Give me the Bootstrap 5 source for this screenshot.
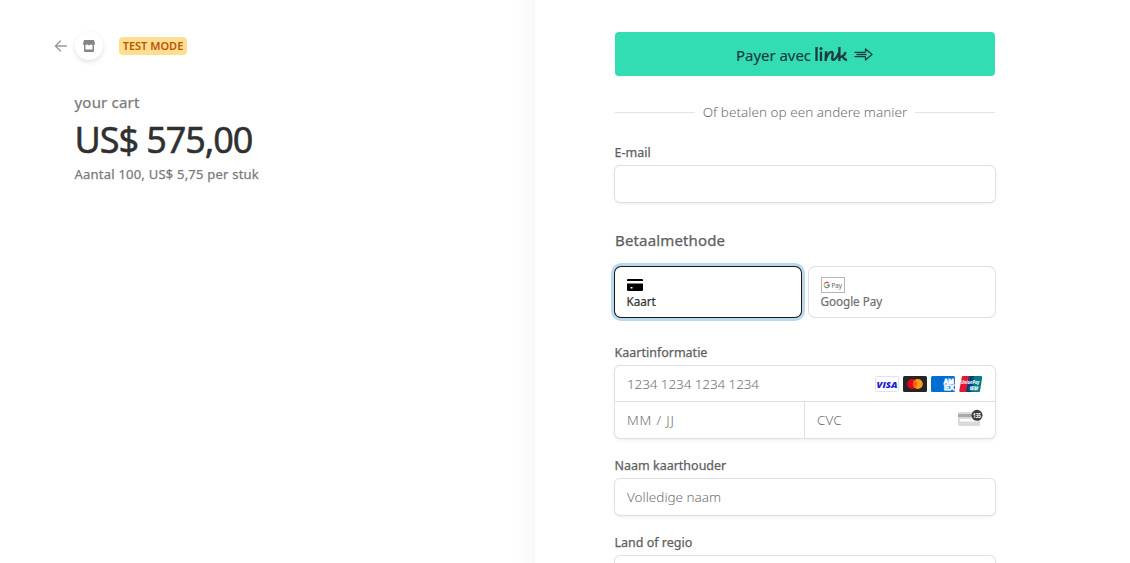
<!DOCTYPE html>
<html lang="nl">
<head>
<meta charset="utf-8">
<meta name="viewport" content="width=device-width, initial-scale=1">
<title>Checkout</title>
<link href="https://cdn.jsdelivr.net/npm/bootstrap@5.3.0/dist/css/bootstrap.min.css" rel="stylesheet">
<style>
body{font-family:"Noto Sans","Open Sans",sans-serif;color:#1a1a1a;background:#fff;height:100vh;overflow:hidden;font-size:13px}
svg{display:block;flex:none}
.summary{width:535px;padding:32px 0 0 54px;background:linear-gradient(90deg,#fff 515px,#f9f9f9 535px)}
.brand{height:28px}
.shop{width:28px;height:28px;margin-left:7px;box-shadow:0 2px 5px rgba(0,0,0,.12);background:#fff}
.mode{background:#ffde92;color:#bb5504;font-size:11px;font-weight:600;line-height:18px;height:18px;width:68px;border-radius:4px}
.order{padding-left:20.5px;margin-top:31px}
.order-name{font-size:15px;line-height:22px;color:#7a7a7a;letter-spacing:.2px;-webkit-text-stroke:.25px #7a7a7a}
.order-total{font-size:36px;font-weight:400;line-height:48px;color:#303030;margin-top:3px;letter-spacing:-1.08px;-webkit-text-stroke:.5px #303030}
.order-info{font-size:13px;line-height:20px;color:#7a7a7a;letter-spacing:.22px;-webkit-text-stroke:.25px #7a7a7a}
.pay{padding:32px 0 0 80px;width:460px}
.link-btn{height:44px;background:#33ddb3;border-radius:4px;color:#1d3944;font-size:15px;border:0;padding:2px 0 0}
.pay-word{letter-spacing:-.05px;-webkit-text-stroke:.15px #1d3944}
.divider{height:20px;margin-top:26px;font-size:13.5px;font-weight:300;color:#6e6e6e;gap:8px}
.divider i{height:1px;background:#e4e4e4;flex:1}
.or{letter-spacing:.03px}
.lbl{height:18px;line-height:20px;font-size:12.5px;color:#606060;margin-bottom:5px;-webkit-text-stroke:.25px #606060;margin-left:-.5px}
.field{height:36px;border-radius:5px;background:#fff;box-shadow:0 0 0 1px #e0e0e0,0 2px 4px rgba(0,0,0,.07),0 1px 1.5px rgba(0,0,0,.05)}
.field-pad{padding:0 12px;font-size:13.5px;font-weight:300;color:#707070}
.digits{letter-spacing:-.1px;padding-top:2px}
.mmjj{letter-spacing:.8px;padding-top:1px}
.cvc{padding-top:1px}
.sect{font-size:15px;line-height:22px;color:#606060;margin-top:27px;letter-spacing:.15px;-webkit-text-stroke:.25px #606060}
.tile{height:50px;border-radius:6px;box-shadow:0 0 0 1px #e0e0e0;padding:10px 12px 0;font-size:11.7px;line-height:17px;color:#707070}
.tile.on{box-shadow:0 0 0 1px #1a1a1a,0 0 0 4px #b9d9ec;color:#303030}
.tile .ico{height:16px}
.tile-name{display:block;margin-left:-.5px;-webkit-text-stroke:.2px currentColor;letter-spacing:-.05px}
.card-box{height:72px}
.num{height:36px;border-bottom:1px solid #e0e0e0}
.exp{height:36px;border-right:1px solid #e0e0e0}
</style>
</head>
<body>
<div class="d-flex h-100">
  <section class="summary">
    <div class="brand d-flex align-items-center">
      <svg width="14" height="14" viewBox="0 0 14 14" fill="none" stroke="#9a9a9a" stroke-width="1.4" stroke-linecap="round" stroke-linejoin="round"><path d="M12.4 7H1.4M6.4 2 1.4 7l5 5"/></svg>
      <div class="shop rounded-circle d-flex align-items-center justify-content-center me-3">
        <svg width="12" height="12" viewBox="0 0 12 12"><path fill="#858585" fill-rule="evenodd" d="M1 0h10l1 3.500c0 .8-.4 1.200-1 1.400V11a1 1 0 0 1-1 1H2a1 1 0 0 1-1-1V4.900c-.6-.2-1-.6-1-1.400zM2.500 5v4.500h7V5L7.800 4.500 6 5.500 4.200 4.500z"/></svg>
      </div>
      <span class="mode text-center">TEST MODE</span>
    </div>
    <div class="order">
      <div class="order-name">your cart</div>
      <div class="order-total">US$ 575,00</div>
      <div class="order-info">Aantal 100, US$ 5,75 per stuk</div>
    </div>
  </section>
  <main class="pay">
    <button class="link-btn w-100 d-flex align-items-center justify-content-center">
      <span class="pay-word">Payer avec</span>
      <svg class="ms-1" width="59" height="18" viewBox="0 0 59 18" fill="none" stroke="#1d3944" stroke-width="2.300"><path d="M1.500 1v14M6 5.500V15M11 5.300 10.600 15M10.800 13c1.500-4.200 3.500-7.200 5.700-7.200 3.200 0-1.200 8.100 1.700 8.100 2.400 0 4.300-3.800 5.900-7.400M24.400 1v14M24.800 10.800c2.900 0 5-1.900 5.700-4.900M26.800 10.300c2 0 1.400 4 5.200 3.400"/><circle cx="6" cy="2.500" r="1.500" fill="#1d3944" stroke="none"/><path stroke-width="1.300" stroke-linejoin="round" d="M39.500 6.300h11M39.500 10.700h11M41.500 8.500h10M50.500 6.300V3l6.500 5.500-6.500 5.500v-3.300"/></svg>
    </button>
    <div class="divider d-flex align-items-center"><i></i><span class="or">Of betalen op een andere manier</span><i></i></div>

    <div class="lbl" style="margin-top:21px">E-mail</div>
    <div class="field"></div>

    <div class="sect">Betaalmethode</div>
    <div class="d-flex" style="gap:8px;margin-top:16px">
      <div class="tile on flex-fill w-50">
        <div class="ico d-flex align-items-center"><svg width="16" height="12" viewBox="0 0 16 12"><path d="M1 0h14a1 1 0 0 1 1 1v1H0V1a1 1 0 0 1 1-1zM0 4.500h16V11a1 1 0 0 1-1 1H1a1 1 0 0 1-1-1zM3.500 8v1.500h2V8z" fill-rule="evenodd"/></svg></div>
        <span class="tile-name">Kaart</span>
      </div>
      <div class="tile flex-fill w-50">
        <div class="ico"><svg width="24" height="16" viewBox="0 0 24 16"><rect x=".5" y=".5" width="23" height="15" fill="#fff" stroke="#b5b5b5"/><g fill="none" stroke-width="1.200"><path stroke="#ea4335" d="M3.500 6.800A2.600 2.600 0 0 1 7.800 6.200"/><path stroke="#fbbc04" d="M3.500 6.800a2.600 2.600 0 0 0 0 2.500"/><path stroke="#34a853" d="M3.500 9.300a2.600 2.600 0 0 0 4 .8"/><path stroke="#4285f4" d="M7.500 10.100c.6-.5.900-1.200.9-2H5.800"/></g><text x="10.500" y="10.600" font-size="7" textLength="10.500" lengthAdjust="spacingAndGlyphs" fill="#5f6368">Pay</text></svg></div>
        <span class="tile-name">Google Pay</span>
      </div>
    </div>

    <div class="lbl" style="margin-top:26px">Kaartinformatie</div>
    <div class="field card-box">
      <div class="num field-pad d-flex align-items-center justify-content-between">
        <span class="digits">1234 1234 1234 1234</span>
        <div class="d-flex gap-1">
          <svg width="24" height="16" viewBox="0 0 24 16"><rect x=".5" y=".5" width="23" height="15" rx="1" fill="#fff" stroke="#e2e2ea"/><text x="1.500" y="11.500" font-family="Open Sans" font-size="9.500" font-weight="800" font-style="italic" textLength="21" lengthAdjust="spacingAndGlyphs" fill="#1a1fd1">VISA</text></svg>
          <svg width="24" height="16" viewBox="0 0 24 16"><rect width="24" height="16" rx="1.500" fill="#252525"/><circle cx="9.200" cy="8" r="5" fill="#eb001b"/><circle cx="14.800" cy="8" r="5" fill="#f79e1b"/><path d="M12 3.900a5 5 0 0 1 0 8.200 5 5 0 0 1 0-8.200z" fill="#ff5f00"/></svg>
          <svg width="24" height="16" viewBox="0 0 24 16"><rect width="24" height="16" rx="1.500" fill="#016fd0"/><g font-family="Liberation Sans" font-size="7" font-weight="700" fill="#016fd0" stroke="#fff" stroke-width=".8"><text x="12.500" y="8" textLength="10.500" lengthAdjust="spacingAndGlyphs">AM</text><text x="13" y="13.800" textLength="10.500" lengthAdjust="spacingAndGlyphs">EX</text></g></svg>
          <svg width="24" height="16" viewBox="0 0 24 16"><path fill="#e21836" d="M4 0h7L8 16H1.500Q0 16 .3 14.500L2.800 1Q3 0 4 0z"/><path fill="#00447c" d="M10 0h6l-3 16H7z"/><path fill="#007b84" d="M15.500 0H22q1.500 0 1.200 1.500L21 15q-.2 1-1.200 1h-7.300z"/><g fill="#fff" font-weight="700" font-style="italic"><text x="2" y="8.300" font-size="5" textLength="18.500" lengthAdjust="spacingAndGlyphs">UnionPay</text><text x="10" y="13.600" font-size="4.500" font-family="Noto Sans CJK SC" textLength="9" lengthAdjust="spacingAndGlyphs">银联</text></g></svg>
        </div>
      </div>
      <div class="d-flex">
        <div class="exp field-pad d-flex align-items-center w-50"><span class="mmjj">MM / JJ</span></div>
        <div class="field-pad d-flex align-items-center justify-content-between w-50"><span class="cvc">CVC</span>
          <svg class="mb-1" width="25" height="18" viewBox="0 0 25 18"><rect x="0" y="3" width="22" height="14" rx="1.500" fill="#dadada"/><path d="M0 5h16v3H0z" fill="#a9a9a9"/><path d="M2 10h17v2.500H2z" fill="#fff"/><circle cx="19" cy="6.300" r="5.500" fill="#3c3c3c"/><text x="15" y="8.800" font-size="6.800" font-weight="700" textLength="8" lengthAdjust="spacingAndGlyphs" fill="#fff">135</text></svg>
        </div>
      </div>
    </div>

    <div class="lbl" style="margin-top:18px">Naam kaarthouder</div>
    <div class="field field-pad d-flex align-items-center"><span class="holder">Volledige naam</span></div>

    <div class="lbl" style="margin-top:18px">Land of regio</div>
    <div class="field"></div>
  </main>
</div>
<script src="https://cdn.jsdelivr.net/npm/bootstrap@5.3.0/dist/js/bootstrap.bundle.min.js"></script>
</body>
</html>
